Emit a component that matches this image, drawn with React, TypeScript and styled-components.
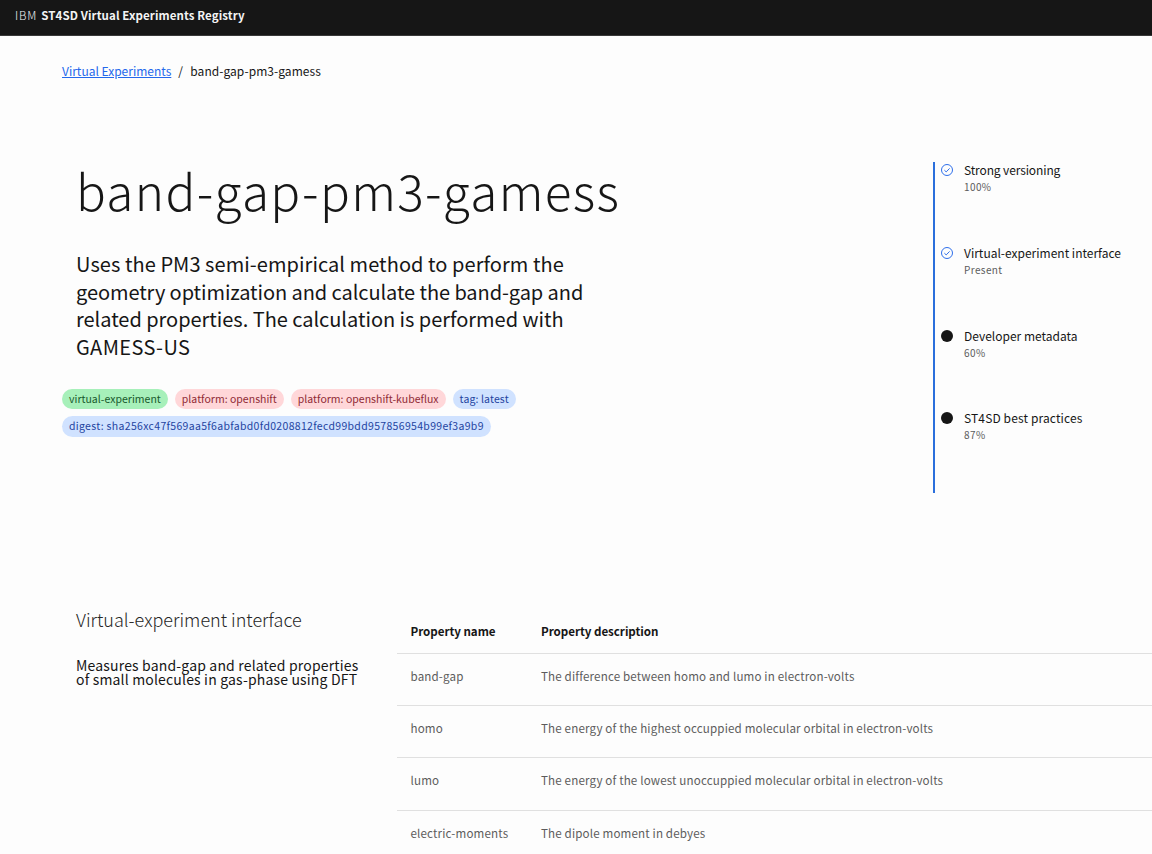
import React from 'react';
import styled, { createGlobalStyle } from 'styled-components';

const Global = createGlobalStyle`
  * { box-sizing: border-box; }
  body {
    margin: 0;
    background: #fdfdfd;
    color: #161616;
    font-family: 'Noto Sans CJK JP', 'Open Sans', sans-serif;
    overflow: hidden;
  }
  h1, h2, p, ul, ol { margin: 0; padding: 0; list-style: none; }
`;

const Page = styled.div`
  height: 854px;
  overflow: hidden;
`;

const Header = styled.header`
  display: flex;
  gap: 4px;
  height: 36px;
  padding: 0 15px;
  background: #161616;
  border-bottom: 1px solid #393939;
  color: #f4f4f4;
  font-size: 11.5px;
  line-height: 30px;
  letter-spacing: 0.1px;
  white-space: nowrap;
`;

const Brand = styled.span`
  font-weight: 300;
  letter-spacing: 0.9px;
`;

const Product = styled.span`
  font-weight: 600;
`;

const Breadcrumb = styled.nav`
  display: flex;
  height: 18px;
  margin: 26px 0 0 62px;
  font-size: 12px;
  line-height: 18px;
`;

const Crumb = styled.span`
  letter-spacing: 0.05px;
`;

const CrumbLink = styled.a`
  color: #2468ec;
  text-decoration: underline;
`;

const Slash = styled.span`
  width: 19px;
  padding-left: 7px;
`;

const Hero = styled.section`
  display: flex;
  justify-content: space-between;
  height: 331px;
  margin-top: 82px;
  padding-left: 62px;
`;

const Summary = styled.div`
  width: 570px;
`;

const Title = styled.h1`
  padding-left: 14px;
  font-size: 49.5px;
  font-weight: 300;
  line-height: 56px;
  letter-spacing: 1.33px;
  white-space: nowrap;
`;

const Description = styled.p`
  padding: 32px 0 0 14px;
  font-size: 20px;
  line-height: 27.7px;
  white-space: nowrap;
`;

const Line = styled.span<{ $track: number }>`
  display: block;
  letter-spacing: ${p => p.$track}px;
`;

const Tags = styled.ul`
  display: flex;
  flex-wrap: wrap;
  gap: 7px;
  margin-top: 28px;
`;

const tones = {
  green: ['#a7f0ba', '#17592c'],
  red: ['#ffd7d9', '#8f2a35'],
  blue: ['#d0e2ff', '#1f449f'],
};
type Tone = keyof typeof tones;

const Tag = styled.li<{ $tone: Tone; $track?: number }>`
  height: 20.5px;
  padding: 0 7px;
  border-radius: 11px;
  background: ${p => tones[p.$tone][0]};
  color: ${p => tones[p.$tone][1]};
  font-size: 10.5px;
  line-height: 20px;
  letter-spacing: ${p => p.$track ?? 0.02}px;
`;

const Steps = styled.ol`
  width: 219px;
  border-left: 2px solid #2b6fdc;
`;

const Step = styled.li`
  display: flex;
  height: 82.8px;
  padding: 2px 0 0 6px;
`;

const StepText = styled.div`
  padding-left: 11px;
`;

const StepLabel = styled.p<{ $track: number }>`
  margin-top: -3px;
  font-size: 12px;
  line-height: 18px;
  letter-spacing: ${p => p.$track}px;
`;

const StepNote = styled.p`
  color: #5c5c5c;
  font-size: 10px;
  line-height: 15px;
  letter-spacing: 0.4px;
`;

const Marker = styled.svg`
  flex: none;
  width: 12px;
  height: 12px;
`;

const Interface = styled.section`
  display: flex;
  margin-top: 117px;
`;

const Intro = styled.div`
  flex: none;
  width: 397px;
  margin-top: -3px;
  padding-left: 76px;
`;

const IntroTitle = styled.h2`
  font-size: 18px;
  font-weight: 300;
  line-height: 24px;
  color: #262626;
`;

const IntroText = styled.p`
  margin-top: 27px;
  font-size: 14px;
  line-height: 14.4px;
  letter-spacing: 0.17px;
  white-space: nowrap;
`;

const Table = styled.div`
  flex: 1;
`;

const TableRow = styled.div<{ $head?: boolean }>`
  display: grid;
  grid-template-columns: 130.5px 1fr;
  height: ${p => (p.$head ? 43.5 : 52.4)}px;
  padding-left: 13.5px;
  border-bottom: 1px solid #e0e0e0;
  color: ${p => (p.$head ? '#161616' : '#5c5c5c')};
  font-size: 11.6px;
  font-weight: ${p => (p.$head ? 600 : 400)};
  line-height: ${p => (p.$head ? 42 : 45)}px;
  letter-spacing: ${p => (p.$head ? -0.04 : 0.15)}px;
`;

const CheckMarker = () => (
  <Marker viewBox="0 0 12 12" fill="none" stroke="#2f6fea">
    <circle cx="6" cy="6" r="5.5" />
    <path d="M3.4 6.2 5.2 7.9 8.6 4.4" />
  </Marker>
);

const DotMarker = () => (
  <Marker viewBox="0 0 12 12">
    <circle cx="6" cy="6" r="6" fill="#161616" />
  </Marker>
);

const tags: { tone: Tone; text: string; track?: number }[] = [
  { tone: 'green', text: 'virtual-experiment' },
  { tone: 'red', text: 'platform: openshift' },
  { tone: 'red', text: 'platform: openshift-kubeflux' },
  { tone: 'blue', text: 'tag: latest', track: 0.12 },
  { tone: 'blue', text: 'digest: sha256xc47f569aa5f6abfabd0fd0208812fecd99bdd957856954b99ef3a9b9', track: 0.32 },
];

const description = [
  { text: 'Uses the PM3 semi-empirical method to perform the', track: 0.06 },
  { text: 'geometry optimization and calculate the band-gap and', track: -0.08 },
  { text: 'related properties. The calculation is performed with', track: -0.03 },
  { text: 'GAMESS-US', track: 0.4 },
];

const steps = [
  { label: 'Strong versioning', note: '100%', done: true, track: -0.12 },
  { label: 'Virtual-experiment interface', note: 'Present', done: true, track: 0 },
  { label: 'Developer metadata', note: '60%', done: false, track: 0 },
  { label: 'ST4SD best practices', note: '87%', done: false, track: 0.13 },
];

const properties = [
  ['band-gap', 'The difference between homo and lumo in electron-volts'],
  ['homo', 'The energy of the highest occuppied molecular orbital in electron-volts'],
  ['lumo', 'The energy of the lowest unoccuppied molecular orbital in electron-volts'],
  ['electric-moments', 'The dipole moment in debyes'],
];

export default function App() {
  return (
    <Page>
      <Global />
      <Header>
        <Brand>IBM</Brand>
        <Product>ST4SD Virtual Experiments Registry</Product>
      </Header>
      <Breadcrumb>
        <CrumbLink>Virtual Experiments</CrumbLink>
        <Slash>/</Slash>
        <Crumb>band-gap-pm3-gamess</Crumb>
      </Breadcrumb>
      <Hero>
        <Summary>
          <Title>band-gap-pm3-gamess</Title>
          <Description>
            {description.map(line => <Line key={line.text} $track={line.track}>{line.text}</Line>)}
          </Description>
          <Tags>
            {tags.map(tag => <Tag key={tag.text} $tone={tag.tone} $track={tag.track}>{tag.text}</Tag>)}
          </Tags>
        </Summary>
        <Steps>
          {steps.map(step => (
            <Step key={step.label}>
              {step.done ? <CheckMarker /> : <DotMarker />}
              <StepText>
                <StepLabel $track={step.track}>{step.label}</StepLabel>
                <StepNote>{step.note}</StepNote>
              </StepText>
            </Step>
          ))}
        </Steps>
      </Hero>
      <Interface>
        <Intro>
          <IntroTitle>Virtual-experiment interface</IntroTitle>
          <IntroText>
            Measures band-gap and related properties<br />
            of small molecules in gas-phase using DFT
          </IntroText>
        </Intro>
        <Table>
          <TableRow $head>
            <span>Property name</span>
            <span>Property description</span>
          </TableRow>
          {properties.map(([name, text]) => (
            <TableRow key={name}>
              <span>{name}</span>
              <span>{text}</span>
            </TableRow>
          ))}
        </Table>
      </Interface>
    </Page>
  );
}
